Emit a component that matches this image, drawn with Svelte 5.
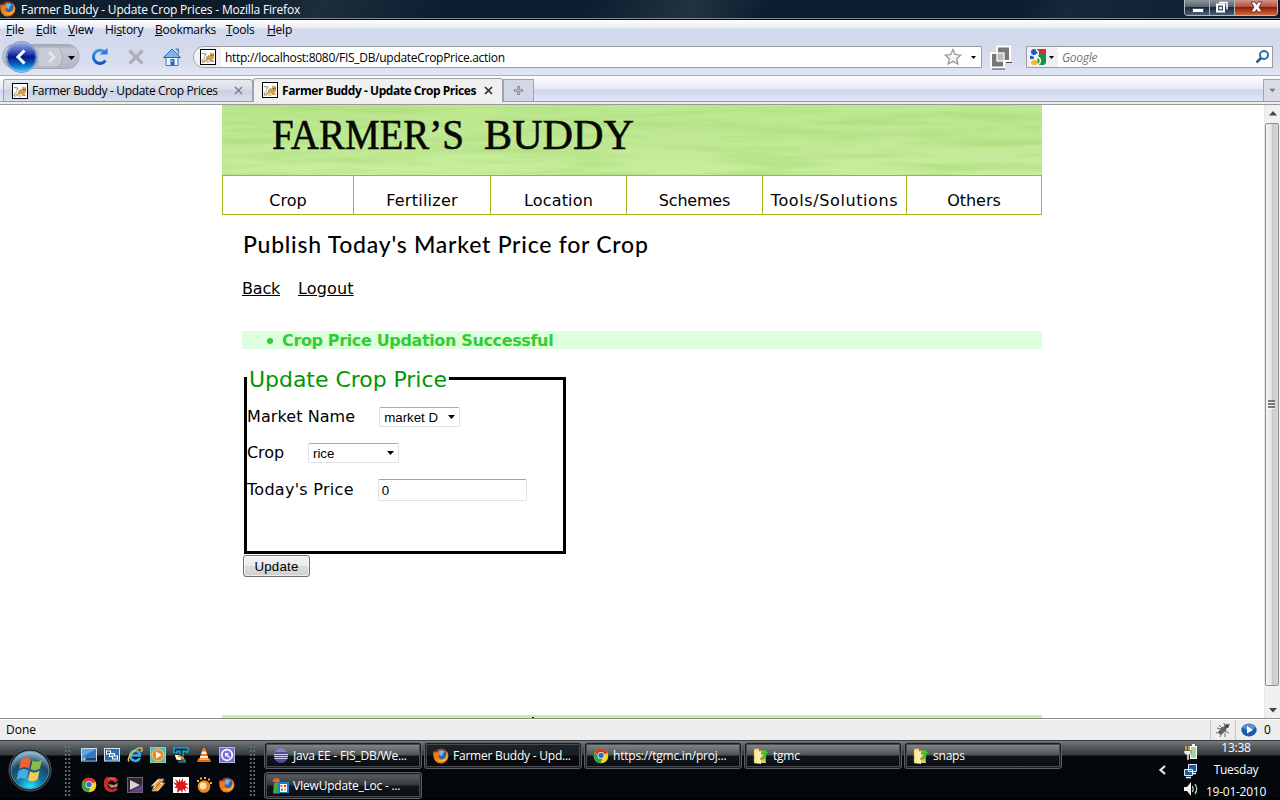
<script>
  const menus = [['F', 'ile', '', 30], ['E', 'dit', '', 32], ['V', 'iew', '', 37], ['s', 'tory', 'Hi', 50], ['B', 'ookmarks', '', 71], ['T', 'ools', '', 41], ['H', 'elp', '', 40]];
  const nav = [['Crop', 131, 0], ['Fertilizer', 137, 0.25], ['Location', 136, 0.15], ['Schemes', 136, -0.2], ['Tools/Solutions', 144, 0.6], ['Others', 134, -0.05]];
  const tasks = [
    ['eclipse', 'Java EE - FIS_DB/We...'],
    ['firefox', 'Farmer Buddy - Upd...'],
    ['chrome', 'https://tgmc.in/proj...'],
    ['folder', 'tgmc'],
    ['folder', 'snaps'],
    ['paint', 'VIewUpdate_Loc - ...']
  ];
  const quick = ['desktop', 'windows', 'ie', 'wmp', 'tt', 'vlc', 'quick', 'chrome', 'ccleaner', 'player', 'winamp', 'splat', 'gom', 'firefox'];
</script>

{#snippet icon(name)}
  <svg class="ico" viewBox="0 0 16 16" width="16" height="16">
    {#if name === 'firefox'}
      <circle cx="8" cy="8" r="7.4" fill="#b93a0c" />
      <circle cx="8.6" cy="7" r="5.4" fill="#2b66b4" />
      <path d="M6 3c2-1 5 0 6 1l-2 1-1 3-3-1z" fill="#79b9e8" />
      <path d="M1 2c0 2 1 3 3 2.2 2-.4 2 .8 3.600 1.800L5.500 8c0 3 5 4 7 1.500C14 7 13.500 4 12 2c3 2 4 6 2.600 9C12 16 5 17 2 12.500-.2 9 0 5 1 2z" fill="#ee7a1b" />
      <path d="M14 4c1 3 .5 7-3 9-3 1.300-6 0-7-2 3 2 7 1.500 9-2 .8-1.600 1-3.500 1-5z" fill="#fbc23c" />
    {:else if name === 'cat'}
      <rect x=".5" y=".5" width="15" height="15" fill="#fff" stroke="#000" />
      <path d="M6 8l2.500-2 1.500.5.5-3.500 1.500 1.500 2-.5v5l-1.500 1.500 2 2.500h-4l-1.500-2-2.500 1-2 1-1-1L6 10z" fill="#cf9d4b" />
      <path d="M2 4.500l4 .5-1.500 2.500M2 13c.5-2 1-3 3-4.500M2 13h2.500M6.500 13h3" fill="none" stroke="#666" stroke-width=".8" />
      <path d="M10.800 6.500h.8M12.800 6.500h.7" stroke="#222" stroke-width="1" />
    {:else if name === 'chrome'}
      <circle cx="8" cy="8" r="7.300" fill="#f7d21e" />
      <path d="M8 8L1.700 4.300C4-.3 12-.5 14.500 4.800z" fill="#df3326" />
      <path d="M8 8L1.700 4.300C-.5 9 2 14.500 7.500 15.300L10 9z" fill="#36a048" />
      <circle cx="8" cy="7.500" r="3.500" fill="#eef4fb" /><circle cx="8" cy="7.500" r="2.700" fill="#2f6fc4" />
    {:else if name === 'eclipse'}
      <circle cx="8" cy="8" r="7" fill="#584a9b" /><path d="M2 4a7 7 0 0112 0" fill="#8f83c8" />
      <path d="M1 6.500h14M1 8.500h14M1.500 10.500h13" stroke="#dcdcf4" stroke-width=".9" />
    {:else if name === 'folder'}
      <path d="M1 1l5-.5v15L1 15z" fill="#f9e89b" stroke="#b89334" stroke-width=".5" />
      <path d="M5 3l8-1v13H5z" fill="#e5c663" /><path d="M4 3l4 1v12l-4-1z" fill="#fff0a9" />
      <path d="M7 11c3-1 4-3 4-5.500H8L12 1l4 4.500h-2.500C13.500 9 12 12 7 11z" fill="#42c936" stroke="#248d20" stroke-width=".5" />
      <path d="M12.500 10v4" stroke="#4c9fd3" stroke-width="1" />
    {:else if name === 'paint'}
      <path d="M1 5h6v10.500H0z" fill="#43a938" /><path d="M0 1l5-1 2 2-1 2.500H4L3 8V4L0 4z" fill="#e36a26" />
      <rect x="5" y="4" width="11" height="11" fill="#1583ca" /><rect x="7" y="6" width="7" height="8" fill="#fff" />
      <path d="M7.500 7h2v2h-2z" fill="#ed7326" /><path d="M11 7h2v2h-2z" fill="#d53631" /><path d="M8 10.500h2v2H8z" fill="#37a444" /><path d="M11 10.500h2v2h-2z" fill="#f1bf25" />
    {:else if name === 'desktop'}
      <rect x=".5" y="1.500" width="15" height="12.500" fill="#3178c5" stroke="#c9dcec" /><path d="M1 2h14L1 10z" fill="#67a3db" />
      <path d="M1 11h14v2.500H1z" fill="#233d60" /><circle cx="3" cy="12" r="1.800" fill="#7dc5ef" />
    {:else if name === 'windows'}
      <rect x=".5" y="1.500" width="15" height="12.500" fill="#2d6daf" stroke="#dbe5ee" />
      <rect x="2.500" y="4" width="4" height="3" fill="#285686" stroke="#fff" /><rect x="5.500" y="6.500" width="5" height="3" fill="#4b8dbe" stroke="#fff" /><rect x="8.500" y="9" width="5" height="3" fill="#3873a9" stroke="#fff" />
    {:else if name === 'ie'}
      <path d="M12.800 11A5 5 0 118 3.800C11 3.800 12.800 5.500 12.800 8.500H4" fill="none" stroke="#36aeed" stroke-width="2.600" />
      <path d="M2 14.500C-1 11 9 0 14.500 1c1 .8.500 2.500-.5 4" fill="none" stroke="#f5c347" stroke-width="1.400" />
    {:else if name === 'wmp'}
      <rect x=".5" y=".5" width="15" height="15" fill="#55b8ce" stroke="#8fd3a3" /><circle cx="8" cy="8" r="6" fill="#ee8a20" stroke="#ffc96f" /><path d="M6 4.500v7L11.500 8z" fill="#fff" />
    {:else if name === 'tt'}
      <path d="M1 1h14v4h-2V4h-3v9h2v2H6v-2h1V4H4v2H1z" fill="#092540" stroke="#17c4ef" stroke-width="1.200" />
      <path d="M1 7l6 1 4 3-2 3-6-1z" fill="#fff" stroke="#111" /><path d="M5 9l6 3" stroke="#f0bd25" stroke-width="2" /><path d="M8 12l3 1" stroke="#d3312b" stroke-width="1.500" />
    {:else if name === 'vlc'}
      <path d="M7 1h2l4 12H3z" fill="#f17c1b" /><path d="M6 4.500h4l.8 2.500H5.200zM4.400 9h7.200l.8 2.500H3.600z" fill="#fff1de" /><path d="M2 11.500h12l1 3.500H1z" fill="#e4660f" /><path d="M4 12h8l1 1H3z" fill="#ffb35b" />
    {:else if name === 'quick'}
      <rect x=".5" y=".5" width="15" height="15" fill="#776fca" stroke="#b8b4ed" /><circle cx="8" cy="8" r="5.300" fill="none" stroke="#fff" stroke-width="1.700" /><path d="M6 6h4L8.500 7.500 11 10l-1 1-2.500-2.500L6 10z" fill="#fff" />
    {:else if name === 'ccleaner'}
      <path d="M14 4A7 7 0 100 8c0 8 10 9 14 4l-3-1c-3 3-8 0-7-4 1-4 5-4 7-1z" fill="#c92b26" /><path d="M4 7l6 1 4-2-1 4-6 1z" fill="#bf8a7b" /><path d="M4 3c2-2 5-2 7 0" stroke="#f5786b" fill="none" />
    {:else if name === 'player'}
      <rect x=".5" y=".5" width="15" height="15" fill="#2e2733" stroke="#66666c" /><path d="M2 15l13-7v7z" fill="#6d3a91" /><path d="M3 3l10 5-10 5z" fill="#d5d3d7" />
    {:else if name === 'winamp'}
      <path d="M1 9l7-7h6l-2 4h3l-7 8H2l2-5z" fill="#f8f2e7" stroke="#777" /><path d="M3 9l7-7h2l-2 5h3l-7 7H4l2-5z" fill="#f1a21f" /><path d="M3 13L13 3" stroke="#853b0d" stroke-width=".7" />
    {:else if name === 'splat'}
      <path d="M0 0h16v16H0z" fill="#fff" /><path d="M6 1l1.500 4L10 1v4l3-2-1 3 4 1-4 1.500 4 3.500-4-1 1 4-3-3-1 4-1.500-3L4 16l.500-5L1 11l2.500-2L0 5l4 1.500L2 2l4 3z" fill="#df1619" />
    {:else if name === 'gom'}
      <circle cx="8" cy="9.500" r="6.300" fill="#ef8a22" /><circle cx="7" cy="9" r="3.400" fill="#ffe4ad" /><path d="M1 4h2M4 1.500h2M8 1h2M12 2.500h2M14 6h2" stroke="#ffad36" stroke-width="2" />
    {/if}
  </svg>
{/snippet}

<div class="screen">
  <header class="title">
    <span class="tico">{@render icon('firefox')}</span><span class="titletext">Farmer Buddy - Update Crop Prices - Mozilla Firefox</span>
    <div class="wins">
      <span class="wb"><svg width="25" height="15"><rect x="7.500" y="8.500" width="11" height="4" rx="1" fill="#fff" stroke="#46515e" /></svg></span>
      <span class="wb"><svg width="25" height="15"><path d="M9 2.500h8v7" fill="none" stroke="#fff" stroke-width="1.500" /><rect x="7" y="4.500" width="7" height="7" fill="#4c5966" stroke="#fff" stroke-width="2" /><path d="M9.500 7.500h2v1h-2z" stroke="#fff" fill="none" /></svg></span>
      <span class="wb red"><svg width="41" height="15"><path d="M16 2h4l1.500 2.500L23 2h4l-3 5 3 5h-4l-1.500-2.500L20 12h-4l3-5z" fill="#fff" stroke="#624044" /></svg></span>
    </div>
  </header>
  <nav class="menu">
    {#each menus as [u, rest, pre, w]}<span style:width="{w}px">{pre}<u>{u}</u>{rest}</span>{/each}
  </nav>
  <div class="toolbar">
    <svg class="navsvg" width="190" height="36" viewBox="0 0 190 36">
      <defs>
        <linearGradient id="pill" x2="0" y2="1"><stop stop-color="#9da3b0" /><stop offset=".2" stop-color="#c4c9d5" /><stop offset="1" stop-color="#b0b7c8" /></linearGradient>
        <linearGradient id="back" x2="0" y2="1"><stop stop-color="#a4b7e5" /><stop offset=".3" stop-color="#465fbd" /><stop offset=".5" stop-color="#06178b" /><stop offset=".75" stop-color="#0b67c1" /><stop offset="1" stop-color="#2ddbff" /></linearGradient>
        <linearGradient id="blue" x2="0" y2="1"><stop stop-color="#3b96ef" /><stop offset="1" stop-color="#1457bc" /></linearGradient>
      </defs>
      <path d="M14 4.500h53c16 0 16 24 0 24H14c-15 0-15-24 0-24z" fill="url(#pill)" stroke="#a4a9b5" />
      <path d="M38 7h17c10 0 10 20 0 20H38z" fill="#c7ccd5" stroke="#a8aebb" />
      <circle cx="21.500" cy="17" r="15.500" fill="url(#back)" stroke="#8697c3" />
      <circle cx="21.500" cy="17" r="14.500" fill="none" stroke="#b6c9ec" stroke-opacity=".6" />
      <path d="M24.500 10.500L18 17l6.500 6.500" fill="none" stroke="#fff" stroke-width="3" />
      <path d="M49 12l5 5-5 5" fill="none" stroke="#e4e7ec" stroke-width="2.500" />
      <path d="M68 16h7l-3.500 4z" fill="#000" />
      <path d="M105 12.500a6.600 6.600 0 10.500 8" fill="none" stroke="url(#blue)" stroke-width="3" /><path d="M99.500 14.500h8V8z" fill="#277fdb" />
      <path d="M129.500 10.500l13 13M142.500 10.500l-13 13" stroke="#b0b2b9" stroke-width="3.300" />
      <path d="M166 17v8.500h12V17l-6-5z" fill="#eef5ff" stroke="#3c77bc" /><path d="M163.500 17.500L172 9l8.500 8.500z" fill="#7eb6f1" stroke="#2465b6" /><path d="M175.500 9h3v5" fill="#82b6e7" stroke="#3c77bc" /><path d="M170.500 19h4v6h-4z" fill="#2665b5" /><path d="M171.500 20h1.500v2h-1.500z" fill="#8bc1ee" />
    </svg>
    <div class="url"><span class="site">{@render icon('cat')}</span><span class="address">http://localhost:8080/FIS_DB/updateCropPrice.action</span>
      <svg width="38" height="20"><path d="M10 2.500l2.200 5 5.500.6-4 3.600 1.200 5.400-4.900-2.800-4.900 2.800 1.200-5.400-4-3.600 5.500-.6z" fill="#f4f4f5" stroke="#8e9298" stroke-width="1.200" /><path d="M28 9h5l-2.500 3z" /></svg>
    </div>
    <svg class="squares" width="24" height="25"><path d="M8 1.500h13v14.500h-6v6.500H2V8h6z" fill="#777" stroke="#fff" stroke-width="2" /><path d="M8 8h7v8H8z" fill="#bcbcbc" stroke="#eee" stroke-width="1.500" /><path d="M3 24h13M17 17.500h6" fill="none" stroke="#444" /></svg>
    <div class="search"><span class="goog"><svg width="31" height="20"><path d="M10 2h9v5h-9z" fill="#e5272c" /><path d="M11 7h8v9l-2 2h-7z" fill="#159346" /><path d="M4 2h6v16H4z" fill="#eef4ff" /><circle cx="7" cy="5" r="3" fill="#245cc2" /><ellipse cx="7.500" cy="15.500" rx="3.500" ry="2.500" fill="#f4b91e" /><path d="M3 9c2-1 4 0 4 3H3z" fill="#245cc2" /><path d="M9 3c3 1 3 4 1 6l3 3c1 3 0 5-3 6" fill="none" stroke="#fff" stroke-width="1.500" /><path d="M22 9h5l-2.500 3z" /></svg></span><em>Google</em>
      <svg width="18" height="20"><circle cx="10" cy="8" r="4" fill="#fff" stroke="#316cae" stroke-width="2" /><path d="M7 11L2.500 15.500" stroke="#285b94" stroke-width="2.500" /></svg></div>
  </div>
  <div class="tabs">
    <div class="tab">{@render icon('cat')}<span class="t1">Farmer Buddy - Update Crop Prices</span><svg width="9" height="9"><path d="M1 1l7 7M8 1L1 8" stroke="#777b84" stroke-width="1.400" /></svg></div>
    <div class="tab active">{@render icon('cat')}<b class="t2">Farmer Buddy - Update Crop Prices</b><svg width="9" height="9"><path d="M1 1l7 7M8 1L1 8" stroke="#252a32" stroke-width="1.600" /></svg></div>
    <div class="newtab"><svg width="9" height="9"><path d="M4.500 0v9M0 4.500h9" stroke="#888" stroke-width="2.600" /><path d="M4.500 1v7M1 4.500h7" stroke="#bbb" /></svg></div>
    <div class="tablist"><svg width="7" height="5"><path d="M1 1h5L3.500 4z" fill="#888" stroke="#666" stroke-width=".5" /></svg></div>
  </div>
  <div class="seam"></div>

  <div class="view">
    <main>
      <div class="page">
        <div class="banner">
          <svg width="820" height="70">
            <defs>
              <linearGradient id="grass" x2="0" y2="1"><stop stop-color="#bde78f" /><stop offset=".45" stop-color="#c0e894" /><stop offset="1" stop-color="#c8ee9d" /></linearGradient>
              <filter id="grain" x="0" y="0" width="100%" height="100%" color-interpolation-filters="sRGB"><feTurbulence type="fractalNoise" baseFrequency=".01 .12" numOctaves="3" seed="8" /><feColorMatrix values="0 0 0 0 .62  0 0 0 0 .84  0 0 0 0 .42  2.500 0 0 0 -1" /></filter>
            </defs>
            <rect width="820" height="70" fill="url(#grass)" /><rect width="820" height="70" filter="url(#grain)" opacity=".45" />
            <text x="50" y="44" textLength="192" lengthAdjust="spacingAndGlyphs">FARMER’S</text>
            <text x="262" y="44" textLength="150" lengthAdjust="spacingAndGlyphs">BUDDY</text>
          </svg>
        </div>
        <div class="sitenav">{#each nav as [n, w, s]}<a style:width="{w}px" style:letter-spacing="{s}px">{n}</a>{/each}</div>
        <section>
          <h1>Publish Today's Market Price for Crop</h1>
          <div class="links"><u>Back</u><u class="out">Logout</u></div>
          <div class="alert"><i></i><b>Crop Price Updation Successful</b></div>
          <fieldset>
            <legend>Update Crop Price</legend>
            <div class="row r1"><label for="market">Market Name</label><div id="market" class="sel"><span>market D</span><svg width="7" height="4"><path d="M0 0h7L3.500 4z" /></svg></div></div>
            <div class="row r2"><label for="crop">Crop</label><div id="crop" class="sel wide"><span>rice</span><svg width="7" height="4"><path d="M0 0h7L3.500 4z" /></svg></div></div>
            <div class="row r3"><label for="price">Today's Price</label><input id="price" value="0" /></div>
          </fieldset>
          <button>Update</button>
        </section>
        <footer><i></i></footer>
      </div>
    </main>
    <div class="scroll">
      <svg width="15" height="17"><path d="M4 10.500h8L8 6z" fill="#444" /></svg>
      <div class="thumb"><svg width="8" height="9"><path d="M0 1h7M0 4h7M0 7h7" stroke="#555" stroke-width="1.500" /><path d="M0 2.500h7M0 5.500h7M0 8.500h7" stroke="#fff" stroke-width=".7" /></svg></div>
      <svg width="15" height="32"><path d="M4 22h8l-4 4.500z" fill="#444" /></svg>
    </div>
  </div>

  <div class="status"><span class="done">Done</span>
    <div class="bug"><svg width="18" height="18"><ellipse cx="9" cy="9.500" rx="2.500" ry="5" transform="rotate(45 9 9)" fill="#60645f" /><path d="M3 7l4 1M5 4l3 3M10 2l1 4M2 12l4-1M6 16l2-4M11 16v-4M15 12l-4-2M13 5l3-2" stroke="#555855" stroke-width=".9" /><circle cx="13" cy="5" r="2" fill="#454a46" /></svg></div>
    <div class="yslow"><svg width="16" height="14"><ellipse cx="8" cy="7" rx="7.700" ry="6.500" fill="#1d5ca8" /><ellipse cx="8" cy="4" rx="6" ry="3" fill="#75a9dc" opacity=".7" /><path d="M6 3v7.500L12 7z" fill="#fff" /></svg><span>0</span></div>
  </div>
  <div class="taskbar">
    <svg class="orb" width="44" height="50" viewBox="0 0 44 50">
      <defs><radialGradient id="orb" cx=".5" cy=".95" r=".9"><stop stop-color="#25e6ff" /><stop offset=".4" stop-color="#126fa3" /><stop offset=".7" stop-color="#174767" /><stop offset="1" stop-color="#94b5c7" /></radialGradient></defs>
      <circle cx="22" cy="25" r="21" fill="#10171c" stroke="#4d5962" /><circle cx="22" cy="25" r="19" fill="url(#orb)" stroke="#648fa7" />
      <path d="M13 15c4-3 7-2 10-.5l-2 9c-3-1.500-6-2-10 .5z" fill="#ee6335" /><path d="M24.500 15.500c3 1.500 6 2 9.500-1l-2 9c-4 2.500-7 2-9.500.5z" fill="#8abd43" /><path d="M10.500 26c4-3 7-2 10-.5l-2 9c-3-1.500-6-2-10 .5z" fill="#4daae0" /><path d="M22 26.500c3 1.500 6 2 9.500-1l-2 9c-4 2.500-7 2-9.500.5z" fill="#fccb45" />
    </svg>
    <div class="grip"></div>
    <div class="quick">{#each quick as q}{@render icon(q)}{/each}</div>
    <div class="grip g2"></div>
    <div class="tasks">{#each tasks as [i, t], n}<div class="task" class:on={n === 1}>{@render icon(i)}<span>{t}</span></div>{/each}</div>
    <svg class="chev" width="8" height="10"><path d="M7 1L2.500 5 7 9" fill="none" stroke="#e8e4f3" stroke-width="2.200" /></svg>
    <svg class="tray" width="17" height="57" viewBox="0 0 17 57">
      <rect x="7.500" y="3.500" width="6" height="12" fill="#98dc99" stroke="#fff" /><path d="M9 2h3" stroke="#fff" stroke-width="2" /><path d="M1 7.500h7v3L6 12v5H4v-5l-3-1.500z" fill="#eee" stroke="#333" stroke-width=".5" /><path d="M3 3v4M6 3v4" stroke="#eab435" stroke-width="1.500" />
      <path d="M5.500 21.500h8v7h-8zM1.500 26.500h8v6h-8z" fill="#185ba2" stroke="#e8eff6" /><path d="M3 34.500h5M10 30.500h3" stroke="#fff" stroke-width="1.500" />
      <path d="M1 44h3l4-5v14l-4-5H1z" fill="#f1f1f6" /><path d="M9.500 43c1 2 1 4 0 6M12 41c2 3 2 7 0 10" fill="none" stroke="#b5e6b6" stroke-width="1.300" />
    </svg>
    <div class="clock"><span class="time">13:38</span><span class="day">Tuesday</span><span class="date">19-01-2010</span></div>
  </div>
</div>

<style>
  :global(body) { margin: 0; overflow: hidden; background: #fff; }
  * { box-sizing: border-box; }
  svg { display: block; flex: none; }
  .screen { width: 1280px; height: 800px; overflow: hidden; display: flex; flex-direction: column; font: 12px/16px "Open Sans", sans-serif; color: #000; white-space: nowrap; }
  .title { height: 20px; flex: none; display: flex; align-items: flex-start; color: #fff; background: linear-gradient(115deg, #13222f 0, #0c1b2b 18%, #1d2d3c 25%, #0b1c30 36%, #0c1e32 46%, #23323f 54%, #0b1d31 60%, #0b1c2f 79%, #16283b 83%, #0b1b2c); border-bottom: 1px solid #05090d; box-shadow: inset 0 -1px #7d8791; }
  .tico { margin: 1px 5px 0 0; }
  .titletext { line-height: 20px; letter-spacing: -.18px; }
  .wins { display: flex; height: 16px; margin-left: auto; margin-right: 2px; border: 1px solid #b2bac1; border-top: 0; border-radius: 0 0 4px 4px; overflow: hidden; }
  .wb { width: 25px; background: linear-gradient(#8a949d, #586571 45%, #17283a 50%, #4c6073); border-right: 1px solid #aeb6be; }
  .wb.red { width: 42px; border: 0; background: linear-gradient(#d29389, #bb4f3e 45%, #8d1d0c 50%, #d36b3c); }
  .menu { height: 20px; flex: none; display: flex; padding: 2px 0 0 6px; background: linear-gradient(#fff, #e6eaf5 8px, #d3d9ec 9px); letter-spacing: -.25px; }
  .toolbar { height: 36px; flex: none; display: flex; background: linear-gradient(#d3d9ec, #d7dcee 60%, #e1e6f5); border-bottom: 1px solid #a9adba; }
  .navsvg { width: 190px; }
  .url { margin: 6px 0 0 3px; width: 789px; height: 22px; border: 1px solid #9b9da2; border-radius: 11px 0 0 11px; background: #fff; display: flex; overflow: hidden; }
  .site { width: 27px; height: 20px; padding: 2px 0 0 6px; background: #f0f1f2; }
  .address { padding-left: 4px; line-height: 22px; flex: 1; letter-spacing: -.29px; }
  .squares { margin: 5px 12px 0 7px; }
  .search { margin: 6px 0 0 1px; width: 247px; height: 22px; border: 1px solid #9b9da2; background: #fff; display: flex; }
  .goog { width: 31px; background: #eff0f3; }
  .search em { color: #777; line-height: 22px; margin-left: 4px; flex: 1; letter-spacing: -.3px; }
  .tabs { height: 26px; flex: none; display: flex; align-items: flex-end; padding-left: 3px; background: linear-gradient(#fff, #e5e8f5 13px, #cfd6ec 14px, #e3e8f8); border-bottom: 1px solid #999ca4; }
  .tab { width: 250px; height: 22px; border: 1px solid #9da1ab; border-bottom: 0; border-radius: 3px 3px 0 0; display: flex; align-items: center; background: linear-gradient(#e9ebf2, #d9dde8 45%, #cbd1e1 50%, #d9deed); padding-left: 8px; }
  .tab .ico { margin-right: 4px; }
  .tab span, .tab b { width: 202px; line-height: 18px; padding-top: 1px; }
  .t1 { letter-spacing: -.35px; }
  .t2 { letter-spacing: -.45px; }
  .active { width: 250px; height: 24px; background: #f0f0f0; margin-bottom: -1px; padding-bottom: 1px; }
  .tab.active b { width: 202px; }
  .newtab { width: 31px; height: 22px; border: 1px solid #a0a4af; border-bottom: 0; background: #d2d7e5; display: grid; place-items: center; }
  .tablist { margin-left: auto; width: 17px; height: 22px; border: 1px solid #a0a4af; border-width: 1px 0 0 1px; background: #d9dce7; display: grid; place-items: center; }
  .seam { height: 3px; flex: none; background: #ededed; border-bottom: 1px solid #999; }
  .view { height: 613px; flex: none; display: flex; }
  main { flex: 1; }
  .page { width: 820px; height: 613px; margin-left: 222px; display: flex; flex-direction: column; font: 16px/20px "DejaVu Sans", sans-serif; }
  .banner { height: 70px; }
  .banner text { font: 42px "Liberation Serif", serif; fill: #050805; stroke: #050805; stroke-width: .6px; }
  .sitenav { height: 40px; border: 1px solid #98bd22; display: flex; }
  .sitenav a { flex: none; border-right: 1px solid #98bd22; padding-top: 15px; text-align: center; }
  .sitenav a:last-child { border-right: 0; }
  section { padding-left: 20px; height: 500px; }
  h1 { font: 500 23px/28px Lato, sans-serif; letter-spacing: .75px; margin: 15px 0 0 1px; }
  .links { display: flex; gap: 18px; margin-top: 21px; letter-spacing: -.2px; }
  .out { letter-spacing: .15px; }
  .alert { height: 18px; margin-top: 32px; background: #dfd; color: #32cd32; display: flex; align-items: center; padding-left: 25px; }
  .alert i { width: 6px; height: 6px; border-radius: 50%; background: #32cd32; margin: 2px 9px 0 0; }
  .alert b { font-size: 16px; letter-spacing: -.36px; padding-top: 2px; }
  fieldset { width: 322px; height: 187px; margin: 18px 0 0 2px; padding: 0; border: 3px solid #000; }
  legend { height: 23px; font-size: 22px; line-height: 20px; padding: 3px 2px 0; color: #009600; letter-spacing: -.04px; }
  .row { display: flex; align-items: center; height: 22px; gap: 24px; letter-spacing: .08px; }
  .r1 { margin-top: 16px; }
  .r2 { margin-top: 14px; }
  .r3 { margin-top: 15px; letter-spacing: .28px; }
  .r2 { letter-spacing: -.1px; }
  .sel { width: 81px; height: 20px; border: 1px solid #dde1e8; border-top-color: #a8aab2; display: flex; align-items: center; justify-content: space-between; padding: 0 4px; font: 13.300px/18px "Liberation Sans", sans-serif; letter-spacing: 0; border-radius: 2px; }
  .sel span { padding-top: 2px; }
  .wide { width: 91px; }
  input { width: 149px; height: 22px; border: 1px solid #dde1e8; border-top-color: #a0a2aa; border-radius: 2px; padding: 1px 3px; font: 13.300px "Liberation Sans", sans-serif; }
  button { display: block; width: 67px; height: 22px; margin: 1px 0 0 1px; border: 1px solid #707070; border-radius: 3px; padding: 0; background: linear-gradient(#f3f3f3, #ebebeb 50%, #ddd 51%, #cfcfcf); font: 13.300px "Liberation Sans", sans-serif; letter-spacing: .2px; box-shadow: inset 0 0 0 1px #fff9; }
  footer { height: 3px; background: #c9f1a4; }
  footer i { display: block; width: 2px; height: 1px; margin: 2px 0 0 310px; background: #111; }
  .scroll { width: 16px; display: flex; flex-direction: column; background: #f0f0f0; border-left: 1px solid #e8e8e8; }
  .thumb { height: 564px; margin: 1px 1px 0 0; border: 1px solid #8d8f94; border-radius: 2px; background: linear-gradient(90deg, #f5f5f5, #e4e4e5 45%, #cacace 52%, #d6d6da); display: grid; place-items: center; }
  .status { height: 22px; flex: none; border-top: 1px solid #8c8c8c; box-shadow: inset 0 1px #fff; background: #f0eded; display: flex; align-items: center; }
  .done { padding-left: 6px; flex: 1; line-height: 14px; }
  .bug { width: 25px; height: 20px; border-left: 1px solid #c9c6c6; padding: 1px 0 0 3px; }
  .yslow { width: 45px; height: 20px; border-left: 1px solid #c9c6c6; display: flex; align-items: center; padding-left: 5px; gap: 7px; }
  .taskbar { height: 60px; flex: none; display: flex; border-top: 1px solid #373c40; background: linear-gradient(#777c80, #585d60 5px, #35393b 14px, #04080d 15px, #03070c 57px, #000 58px); color: #fff; }
  .orb { margin: 4px 0 0 8px; }
  .grip { width: 8px; height: 51px; margin: 4px 0 0 12px; background: radial-gradient(circle, #697077 .7px, transparent 1px) 0 0/3.500px 4px; }
  .quick { width: 161px; margin-left: 9px; padding-top: 6px; display: grid; grid-template-columns: repeat(7, 16px); gap: 14px 7px; align-content: start; }
  .g2 { margin-left: 7px; }
  .tasks { width: 800px; margin: 1px 0 0 7px; display: grid; grid-template-columns: repeat(5, 158px); grid-template-rows: 27px 27px; gap: 3px 2px; }
  .task { border: 1px solid #5c6165; border-radius: 3px; box-shadow: inset 0 0 0 1px #1c2023, inset 0 0 0 2px #464b50; display: flex; align-items: center; padding-left: 8px; gap: 4px; letter-spacing: -.22px; background: linear-gradient(#8b8e91, #505456 12px, #11161c 13px, #080d12); }
  .task:last-child { background: linear-gradient(#5f6265, #35393c 12px, #11161c 13px, #080d12); }
  .on { background: linear-gradient(#202326, #1b1e20 12px, #060708 13px, #0a0c0e); }
  .chev { margin: 24px 0 0 94px; }
  .tray { margin: 2px 0 0 17px; }
  .clock { flex: 1; margin-left: 2px; display: flex; flex-direction: column; text-align: center; padding-right: 10px; letter-spacing: -.25px; }
  .time { line-height: 14px; }
  .day { line-height: 16px; margin-top: 7px; }
  .date { line-height: 16px; margin-top: 6px; }
</style>
